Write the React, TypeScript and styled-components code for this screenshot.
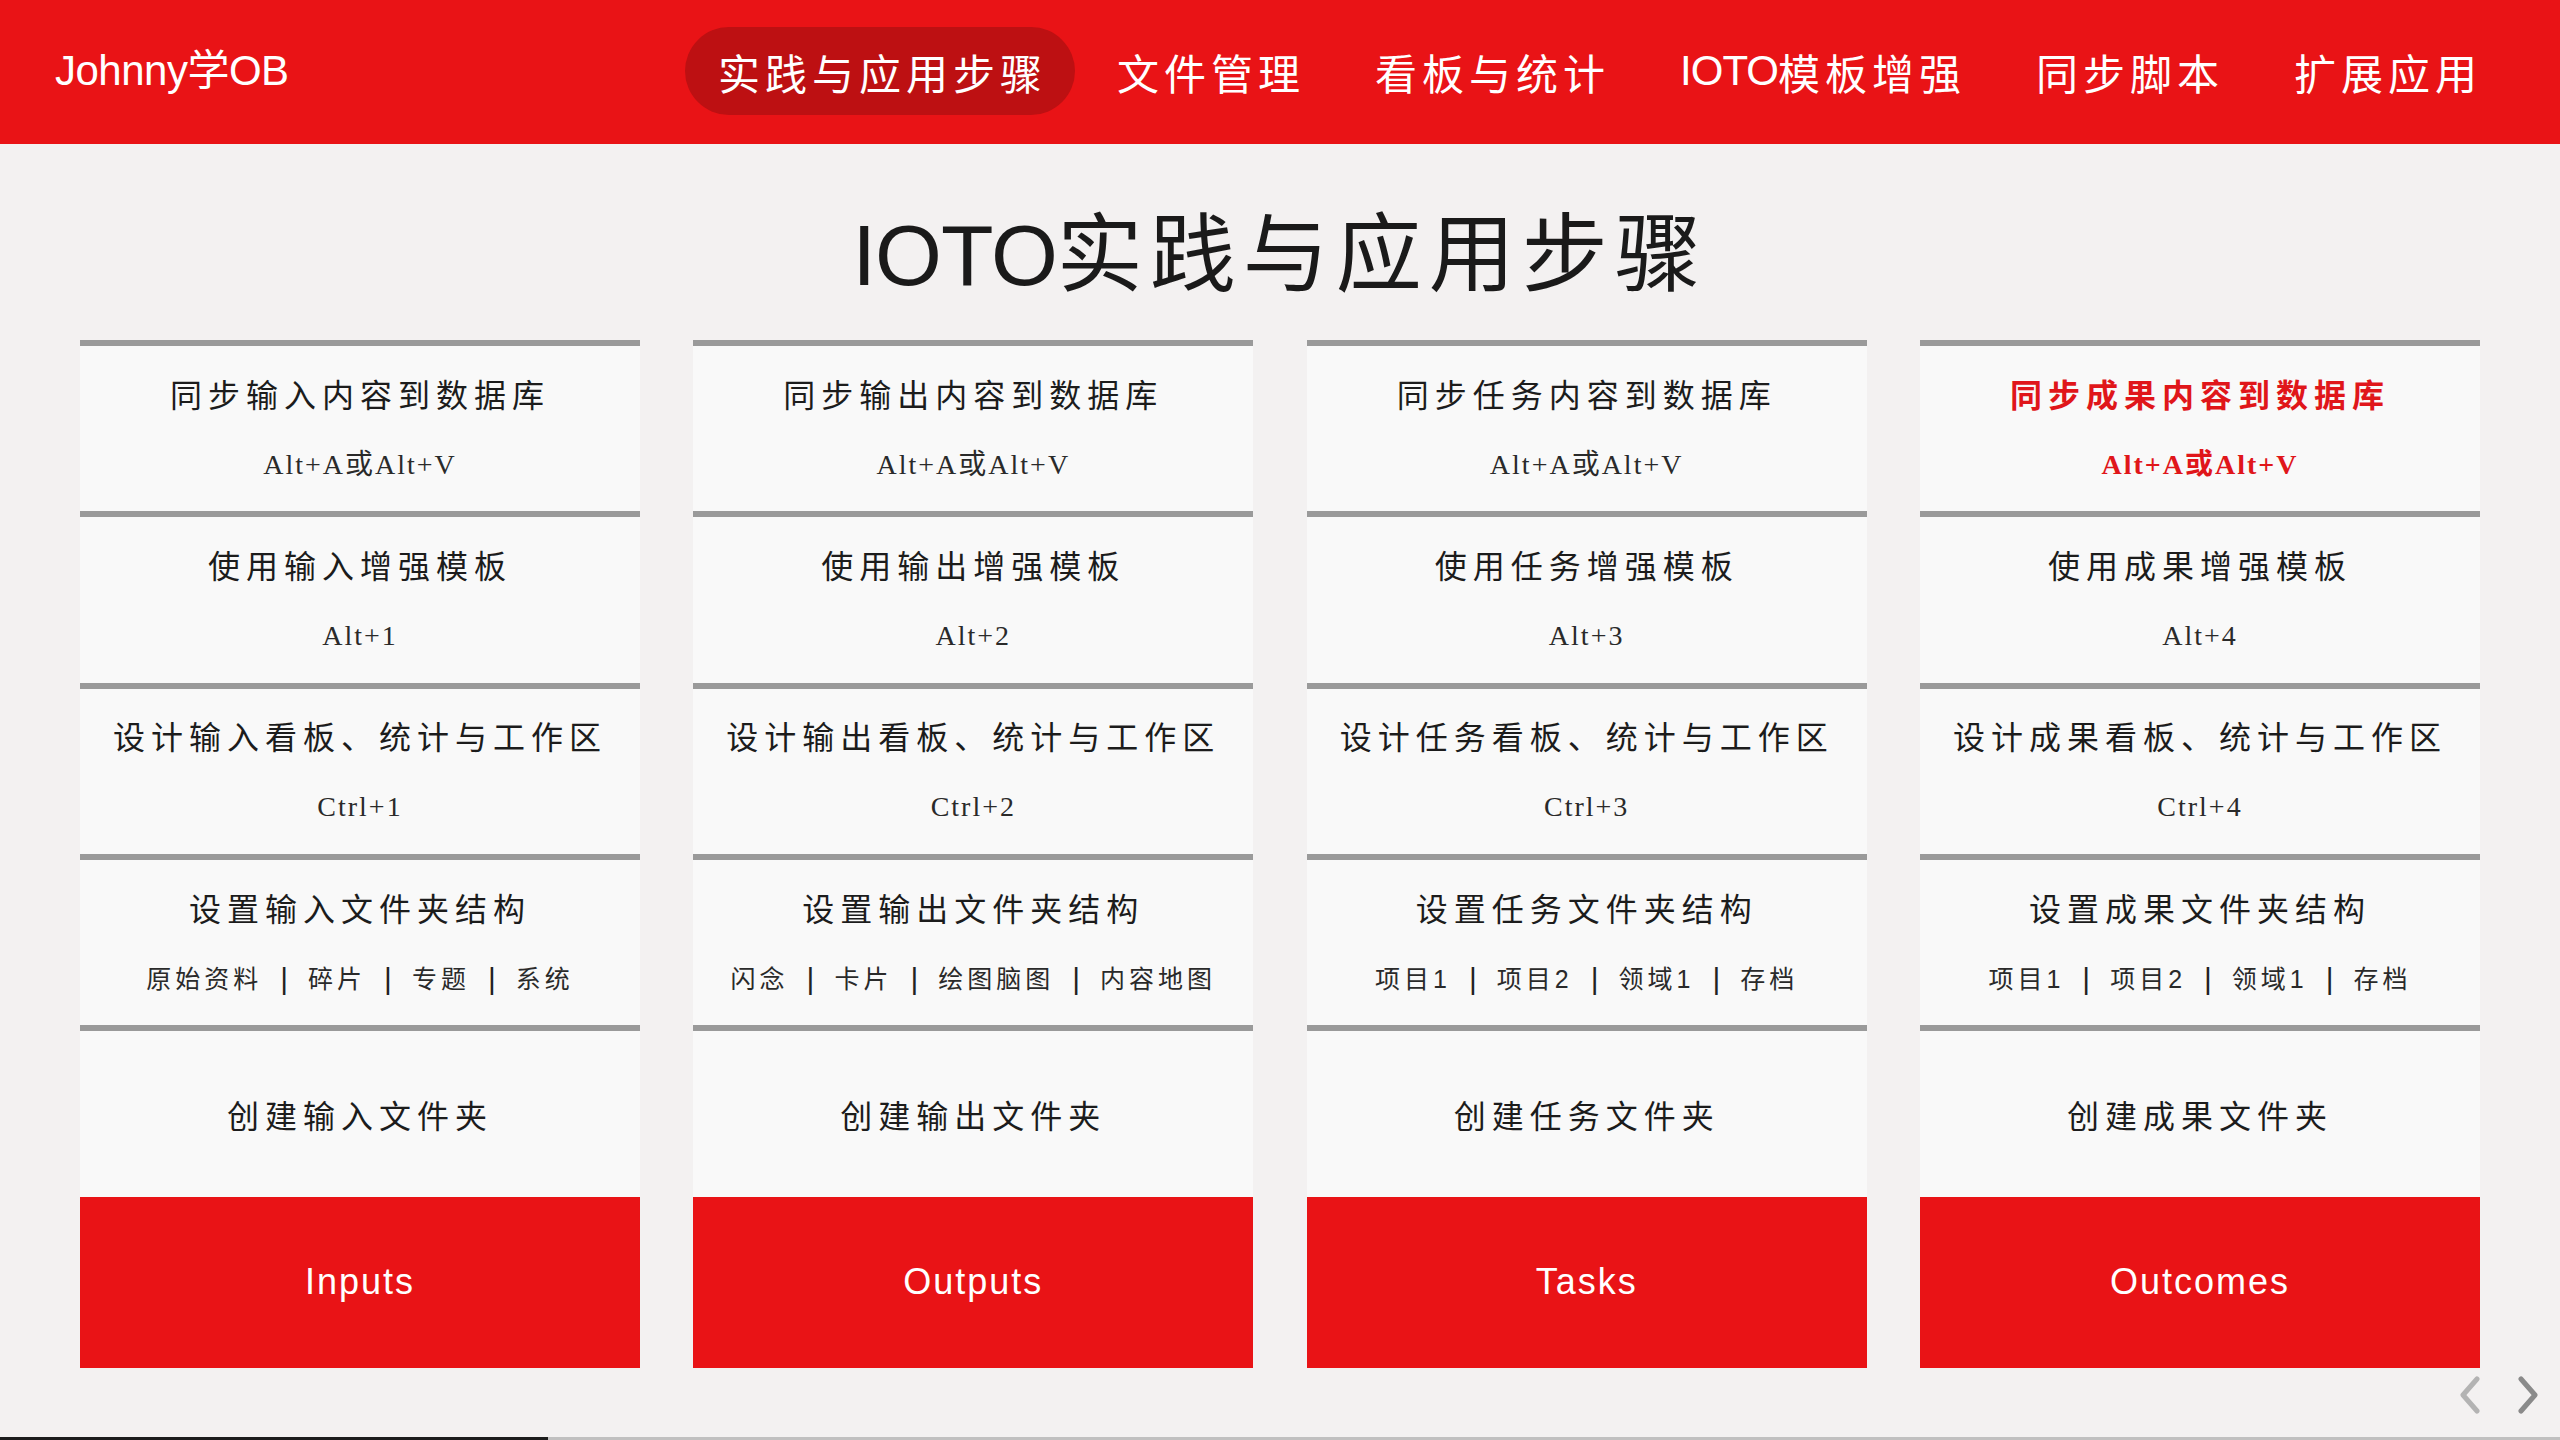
import React from "react";
import styled, { createGlobalStyle } from "styled-components";

const CJK = `"Noto Sans CJK SC", "Noto Sans CJK JP", sans-serif`;
const NARROW = `"Liberation Sans Narrow", "Liberation Sans", ${CJK}`;

const Global = createGlobalStyle`
  html, body { margin: 0; padding: 0; background: #f3f1f1; }
  body { font-family: ${CJK}; }
  * { box-sizing: border-box; }
`;

const Page = styled.div`
  position: relative;
  width: 2560px;
  height: 1440px;
  overflow: hidden;
  background: #f3f1f1;
  display: flex;
  flex-direction: column;
`;

const Header = styled.header`
  height: 144px;
  flex: none;
  background: #e91316;
  display: flex;
  align-items: center;
  justify-content: space-between;
  padding: 0 50px 2px 55px;
`;

const Logo = styled.div`
  color: #fff;
  font-family: ${NARROW};
  font-size: 42px;
  line-height: 1;
  letter-spacing: -0.5px;
`;

const Nav = styled.nav`
  display: flex;
  align-items: center;
  gap: 9px;
`;

const NavItem = styled.div<{ $active?: boolean }>`
  height: 88px;
  display: flex;
  align-items: center;
  padding: 0 28px 0 33px;
  border-radius: 44px;
  background: ${(p) => (p.$active ? "#bd1012" : "transparent")};
  color: #fff;
  font-family: ${NARROW};
  font-size: 42px;
  letter-spacing: 5px;
  white-space: nowrap;
`;

const Latin = styled.span<{ $track: number }>`
  letter-spacing: ${(p) => p.$track}px;
`;

const Main = styled.main`
  flex: 1;
  display: flex;
  flex-direction: column;
  align-items: center;
  padding: 0 80px;
`;

const Title = styled.h1`
  margin: 68px 0 42px;
  height: 86px;
  font-family: ${NARROW};
  font-weight: 400;
  font-size: 86px;
  line-height: 86px;
  letter-spacing: 7px;
  color: #1a1a1a;
  white-space: nowrap;
`;

const Grid = styled.div`
  width: 100%;
  display: grid;
  grid-template-columns: repeat(4, 1fr);
  column-gap: 53.33px;
`;

const Column = styled.section`
  display: grid;
  grid-template-rows: repeat(6, 171.33px);
`;

const Cell = styled.div`
  border-top: 6px solid #9a9a9a;
  background: #f9f9f9;
  display: flex;
  flex-direction: column;
  align-items: center;
  justify-content: center;
  gap: 32px;
`;

const Label = styled.div<{ $hot?: boolean }>`
  font-family: ${CJK};
  font-size: 32px;
  line-height: 40px;
  letter-spacing: 6px;
  font-weight: ${(p) => (p.$hot ? 700 : 400)};
  color: ${(p) => (p.$hot ? "#e0161a" : "#1c1c1c")};
  white-space: nowrap;
`;

const Keys = styled.div<{ $hot?: boolean }>`
  font-family: "Liberation Serif", ${CJK};
  font-size: 28px;
  line-height: 40px;
  letter-spacing: 2px;
  font-weight: ${(p) => (p.$hot ? 700 : 400)};
  color: ${(p) => (p.$hot ? "#e0161a" : "#2a2a2a")};
  white-space: nowrap;
`;

const Folders = styled.div`
  display: flex;
  align-items: center;
  font-family: "Liberation Sans", ${CJK};
  font-size: 25px;
  line-height: 40px;
  letter-spacing: 4px;
  color: #2a2a2a;
  white-space: nowrap;
`;

const Sep = styled.span`
  margin: 0 16px 0 18px;
  font-size: 30px;
  color: #222;
`;

const Block = styled.div`
  background: #e91316;
  display: flex;
  align-items: center;
  justify-content: center;
  color: #fff;
  font-family: ${NARROW};
  font-size: 36px;
  letter-spacing: 2px;
`;

const Progress = styled.div`
  position: absolute;
  left: 0;
  right: 0;
  bottom: 0;
  height: 3px;
  background: #c0c0c0;
`;

const ProgressFill = styled.div`
  height: 100%;
  background: #1c1c1c;
`;

const Controls = styled.div`
  position: absolute;
  right: 20px;
  bottom: 26px;
  display: flex;
  gap: 34px;
`;

const Arrow = styled.svg<{ $shade: string }>`
  width: 24px;
  height: 38px;
  color: ${(p) => p.$shade};
`;

type Col = {
  key: string;
  en: string;
  n: number;
  folders: string[];
  hot?: boolean;
};

const cols: Col[] = [
  { key: "输入", en: "Inputs", n: 1, folders: ["原始资料", "碎片", "专题", "系统"] },
  { key: "输出", en: "Outputs", n: 2, folders: ["闪念", "卡片", "绘图脑图", "内容地图"] },
  { key: "任务", en: "Tasks", n: 3, folders: ["项目1", "项目2", "领域1", "存档"] },
  { key: "成果", en: "Outcomes", n: 4, folders: ["项目1", "项目2", "领域1", "存档"], hot: true },
];

const navItems: { latin?: string; text: string }[] = [
  { text: "实践与应用步骤" },
  { text: "文件管理" },
  { text: "看板与统计" },
  { latin: "IOTO", text: "模板增强" },
  { text: "同步脚本" },
  { text: "扩展应用" },
];

function Chevron({ dir, shade }: { dir: "left" | "right"; shade: string }) {
  const d = dir === "left" ? "M19 3 L5 19 L19 35" : "M5 3 L19 19 L5 35";
  return (
    <Arrow $shade={shade} viewBox="0 0 24 38">
      <path d={d} fill="none" stroke="currentColor" strokeWidth="5" strokeLinecap="round" strokeLinejoin="round" />
    </Arrow>
  );
}

export default function App() {
  return (
    <>
      <Global />
      <Page>
        <Header>
          <Logo>Johnny学OB</Logo>
          <Nav>
            {navItems.map((t, i) => (
              <NavItem key={t.text} $active={i === 0}>
                {t.latin && <Latin $track={-1}>{t.latin}</Latin>}
                {t.text}
              </NavItem>
            ))}
          </Nav>
        </Header>
        <Main>
          <Title>
            <Latin $track={-1}>IOTO</Latin>实践与应用步骤
          </Title>
          <Grid>
            {cols.map((c) => (
              <Column key={c.key}>
                <Cell>
                  <Label $hot={c.hot}>同步{c.key}内容到数据库</Label>
                  <Keys $hot={c.hot}>Alt+A或Alt+V</Keys>
                </Cell>
                <Cell>
                  <Label>使用{c.key}增强模板</Label>
                  <Keys>Alt+{c.n}</Keys>
                </Cell>
                <Cell>
                  <Label>设计{c.key}看板、统计与工作区</Label>
                  <Keys>Ctrl+{c.n}</Keys>
                </Cell>
                <Cell>
                  <Label>设置{c.key}文件夹结构</Label>
                  <Folders>
                    {c.folders.map((f, i) => (
                      <React.Fragment key={f + i}>
                        {i > 0 && <Sep>|</Sep>}
                        <span>{f}</span>
                      </React.Fragment>
                    ))}
                  </Folders>
                </Cell>
                <Cell>
                  <Label>创建{c.key}文件夹</Label>
                </Cell>
                <Block>{c.en}</Block>
              </Column>
            ))}
          </Grid>
        </Main>
        <Controls>
          <Chevron dir="left" shade="#b3b3b3" />
          <Chevron dir="right" shade="#8a8a8a" />
        </Controls>
        <Progress>
          <ProgressFill style={{ width: `${(548 / 2560) * 100}%` }} />
        </Progress>
      </Page>
    </>
  );
}
